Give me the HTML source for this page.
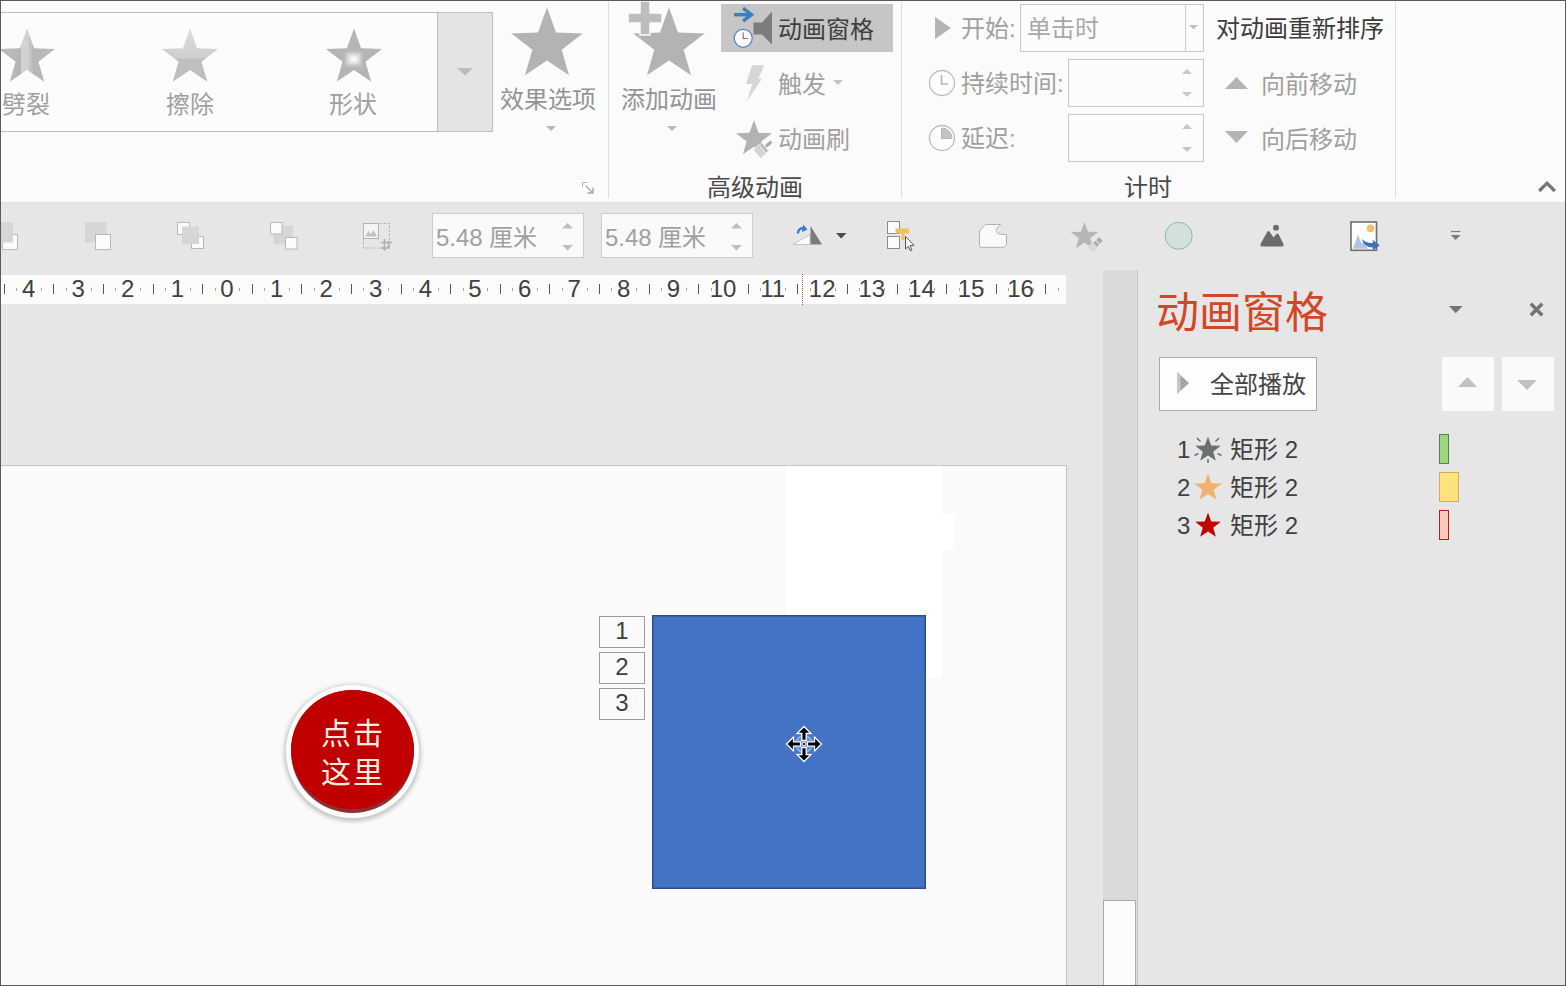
<!DOCTYPE html>
<html lang="zh-CN">
<head>
<meta charset="utf-8">
<title>动画窗格</title>
<style>
html,body{margin:0;padding:0;}
body{width:1566px;height:986px;overflow:hidden;position:relative;background:#e6e6e6;font-family:"Liberation Sans",sans-serif;font-size:24px;color:#a0a0a0;}
.abs{position:absolute;}
.t{position:absolute;white-space:nowrap;line-height:30px;height:30px;margin-top:2px;}
.dk{color:#3f3f3f;}
svg{position:absolute;overflow:visible;}
#ribbon{left:0;top:0;width:1566px;height:203px;background:#fbfbfb;}
.vsep{position:absolute;width:1px;background:#dcdcdc;top:2px;height:196px;}
.box{position:absolute;box-sizing:border-box;border:1px solid #c6c6c6;background:#fcfcfc;}
#ruler{left:0;top:275px;width:1066px;height:29px;background:#fcfcfc;}
#ruler .n{position:absolute;top:-1px;height:30px;line-height:30px;width:40px;margin-left:-20px;text-align:center;color:#404040;font-size:24px;}
#ruler .h{position:absolute;top:9px;width:1px;height:10px;background:#5a5a5a;}
#ruler .q{position:absolute;top:13px;width:1px;height:3px;background:#a4a4a4;}
#slide{left:-10px;top:465px;width:1077px;height:540px;background:#fafafa;border:1px solid #c4c4c4;box-sizing:border-box;}
.tag{position:absolute;left:599px;width:46px;height:32px;box-sizing:border-box;border:1px solid #9c9c9c;background:#fafafa;color:#404040;text-align:center;line-height:28px;font-size:24px;}
.row{position:absolute;left:1177px;height:38px;line-height:38px;margin-top:2px;color:#404040;white-space:nowrap;}
</style>
</head>
<body>

<!-- ===== RIBBON ===== -->
<div id="ribbon" class="abs">
  <!-- star defs -->
  <svg width="0" height="0" style="left:0;top:0;">
    <defs>
      <polygon id="st" points="0.0,-100.0 24.1,-33.2 95.1,-30.9 39.0,12.7 58.8,80.9 0.0,41.0 -58.8,80.9 -39.0,12.7 -95.1,-30.9 -24.1,-33.2"/>
      <linearGradient id="gSplit" x1="0" x2="1" y1="0" y2="0">
        <stop offset="0" stop-color="#bcbcbc"/><stop offset="0.395" stop-color="#b6b6b6"/><stop offset="0.40" stop-color="#d3d3d3"/><stop offset="0.535" stop-color="#d0d0d0"/><stop offset="0.54" stop-color="#c3c3c3"/><stop offset="0.595" stop-color="#c3c3c3"/><stop offset="0.60" stop-color="#b6b6b6"/><stop offset="1" stop-color="#bcbcbc"/>
      </linearGradient>
      <linearGradient id="gWipe" x1="0" x2="0" y1="0" y2="1">
        <stop offset="0" stop-color="#dcdcdc"/><stop offset="0.38" stop-color="#d3d3d3"/><stop offset="0.55" stop-color="#cecece"/><stop offset="0.57" stop-color="#c0c0c0"/><stop offset="1" stop-color="#bdbdbd"/>
      </linearGradient>
      <filter id="blur2" x="-50%" y="-50%" width="200%" height="200%"><feGaussianBlur stdDeviation="1.8"/></filter>
          </defs>
  </svg>
  <!-- gallery -->
  <div class="box" style="left:-5px;top:12px;width:443px;height:120px;border-color:#bebebe;"></div>
  <div class="box" style="left:437px;top:12px;width:56px;height:120px;background:#e4e4e4;border-color:#bebebe;"></div>
  <svg style="left:27.200px;top:57.500px;" width="1" height="1"><use href="#st" transform="scale(0.294)" fill="url(#gSplit)"/></svg>
  <svg style="left:189.800px;top:57.500px;" width="1" height="1"><use href="#st" transform="scale(0.294)" fill="url(#gWipe)"/></svg>
  <svg style="left:354px;top:57.500px;" width="1" height="1"><use href="#st" transform="scale(0.294)" fill="#b5b5b5"/><rect x="-8" y="-5.500" width="15" height="13" fill="#d9d9d9" filter="url(#blur2)"/><rect x="-4" y="-2" width="7.500" height="6" fill="#fbfbfb" filter="url(#blur2)"/></svg>
  <div class="t" style="left:2px;top:88px;">劈裂</div>
  <div class="t" style="left:166px;top:88px;">擦除</div>
  <div class="t" style="left:329px;top:88px;">形状</div>
  <svg style="left:456.500px;top:68px;" width="16" height="8"><polygon points="0,0 16,0 8,7.500" fill="#bcbcbc"/></svg>

  <!-- effect options -->
  <svg style="left:547px;top:45px;" width="1" height="1"><use href="#st" transform="scale(0.375)" fill="#b3b3b3"/></svg>
  <div class="t" style="left:500px;top:83px;color:#949494;">效果选项</div>
  <svg style="left:546px;top:126px;" width="10" height="5"><polygon points="0,0 10,0 5,5" fill="#b8b8b8"/></svg>
  <!-- dialog launcher -->
  <svg style="left:582px;top:182px;" width="13" height="13" viewBox="0 0 13 13"><path d="M0.5,5V0.5H5" fill="none" stroke="#b0b0b0" stroke-width="1"/><path d="M4,4L11,11M11,5.5V11H5.5" fill="none" stroke="#a8a8a8" stroke-width="1.4"/></svg>

  <div class="vsep" style="left:608px;"></div>

  <!-- add animation -->
  <svg style="left:669px;top:45px;" width="1" height="1"><use href="#st" transform="scale(0.375)" fill="#b3b3b3"/></svg>
  <svg style="left:628px;top:1px;" width="34" height="34" viewBox="0 0 34 34"><path d="M12,0H22V12H34V22H22V34H12V22H0V12H12Z" fill="#bdbdbd" stroke="#fbfbfb" stroke-width="1.5"/></svg>
  <div class="t" style="left:621px;top:83px;color:#949494;">添加动画</div>
  <svg style="left:667px;top:126px;" width="10" height="5"><polygon points="0,0 10,0 5,5" fill="#b8b8b8"/></svg>

  <!-- animation pane button -->
  <div class="abs" style="left:721px;top:4px;width:172px;height:48px;background:#c6c6c6;"></div>

  <!-- animation pane icon -->
  <svg style="left:730px;top:4px;" width="46" height="48" viewBox="730 4 46 48">
    <path d="M734,14.700H749" stroke="#3f7cc4" stroke-width="3.4" fill="none"/>
    <path d="M743,8.200L751.500,14.700L743,21.200" stroke="#3f7cc4" stroke-width="3.4" fill="none"/>
    <path d="M753.500,22.500H762L772,11.500V44.500L762,34.500H753.500Z" fill="#7c7c7c"/>
    <circle cx="743.200" cy="38.300" r="9" fill="#fdfdfd" stroke="#4a80d2" stroke-width="1.2"/>
    <path d="M743.200,32.500V38.500H748" stroke="#8a6a9a" stroke-width="1.2" fill="none"/>
  </svg>
  <!-- trigger bolt -->
  <svg style="left:744px;top:63px;" width="24" height="40" viewBox="744 63 24 40">
    <path d="M752,65.200H764.300L758.200,78.800H762L747,101L752.300,84H746Z" fill="#d6d6d6"/>
  </svg>
  <!-- animation painter -->
  <svg style="left:753.800px;top:138.500px;" width="1" height="1">
    <use href="#st" transform="scale(0.189)" fill="#b3b3b3"/>
    <g transform="translate(12.500,6.900) rotate(-40)" stroke="#f4f4f4" stroke-width="0.8">
      <rect x="-12.500" y="-5.800" width="7.500" height="11.600" fill="#d3d3d3"/>
      <rect x="-5" y="-5.200" width="3.500" height="10.400" fill="#b8b8b8"/>
      <rect x="-1.500" y="-1.900" width="8.500" height="3.800" rx="1.900" fill="#a9a9a9"/>
    </g>
  </svg>
  <div class="t dk" style="left:778px;top:13px;">动画窗格</div>
  <div class="t" style="left:778px;top:68px;">触发</div>
  <svg style="left:833px;top:80px;" width="10" height="5"><polygon points="0,0 10,0 5,5" fill="#c4c4c4"/></svg>
  <div class="t" style="left:778px;top:123px;">动画刷</div>
  <div class="t dk" style="left:707px;top:171px;color:#4a4a4a;">高级动画</div>

  <div class="vsep" style="left:901px;"></div>

  <!-- ===== timing group ===== -->
  <svg style="left:935px;top:17px;" width="16" height="22"><polygon points="0,0 16,11 0,22" fill="#b4b4b4"/></svg>
  <div class="t" style="left:961px;top:12px;">开始:</div>
  <div class="box" style="left:1020px;top:4px;width:184px;height:48px;border-color:#c8c8c8;"></div>
  <div class="abs" style="left:1185px;top:5px;width:1px;height:46px;background:#d0d0d0;"></div>
  <div class="t" style="left:1027px;top:12px;color:#a8a8a8;">单击时</div>
  <svg style="left:1189px;top:25px;" width="9" height="5"><polygon points="0,0 9,0 4.5,4.5" fill="#c0c0c0"/></svg>
  <div class="t dk" style="left:1216px;top:12px;color:#3c3c3c;">对动画重新排序</div>

  <svg style="left:928px;top:69px;" width="28" height="28" viewBox="0 0 28 28"><circle cx="14" cy="14" r="12.5" fill="#fdfdfd" stroke="#bdbdbd" stroke-width="1.3"/><path d="M13.5,6V15H20" fill="none" stroke="#b4b4b4" stroke-width="1.6"/></svg>
  <div class="t" style="left:961px;top:67px;">持续时间:</div>
  <div class="box" style="left:1068px;top:59px;width:136px;height:48px;border-color:#c8c8c8;"></div>
  <svg style="left:1182px;top:69px;" width="10" height="5"><polygon points="0,5 10,5 5,0" fill="#c8c8c8"/></svg>
  <svg style="left:1182px;top:92px;" width="10" height="5"><polygon points="0,0 10,0 5,5" fill="#c8c8c8"/></svg>
  <svg style="left:1225px;top:77px;" width="23" height="12"><polygon points="0,12 23,12 11.5,0" fill="#b4b4b4"/></svg>
  <div class="t" style="left:1260.500px;top:68px;">向前移动</div>

  <svg style="left:928px;top:124px;" width="28" height="28" viewBox="0 0 28 28"><circle cx="14" cy="14" r="12.5" fill="#fdfdfd" stroke="#bdbdbd" stroke-width="1.3"/><path d="M13.5,4V14.5H24A10.3,10.3 0 0 0 13.5,4Z" fill="#c4c4c4" stroke="#b4b4b4" stroke-width="1"/></svg>
  <div class="t" style="left:961px;top:122px;">延迟:</div>
  <div class="box" style="left:1068px;top:114px;width:136px;height:48px;border-color:#c8c8c8;"></div>
  <svg style="left:1182px;top:124px;" width="10" height="5"><polygon points="0,5 10,5 5,0" fill="#c8c8c8"/></svg>
  <svg style="left:1182px;top:147px;" width="10" height="5"><polygon points="0,0 10,0 5,5" fill="#c8c8c8"/></svg>
  <svg style="left:1225px;top:131px;" width="23" height="12"><polygon points="0,0 23,0 11.5,12" fill="#b4b4b4"/></svg>
  <div class="t" style="left:1260.500px;top:123px;">向后移动</div>
  <div class="t dk" style="left:1124px;top:171px;color:#4a4a4a;">计时</div>
  <div class="vsep" style="left:1395px;"></div>
  <svg style="left:1538px;top:180px;" width="18" height="13" viewBox="0 0 18 13"><path d="M1.2,11L9,3.200L16.800,11" fill="none" stroke="#747474" stroke-width="3.2"/></svg>
  <div class="abs" style="left:0;top:202px;width:1566px;height:1px;background:#e2e2e2;"></div>
</div>


<!-- ===== TOOLBAR (quick access) ===== -->
<div id="toolbar" class="abs" style="left:0;top:203px;width:1566px;height:68px;">
  <!-- arrange icons (disabled) ; coordinates relative to toolbar top=203 -->
  <svg style="left:0;top:0;" width="420" height="68" viewBox="0 203 420 68">
    <g stroke="#b9b9b9" stroke-width="1" fill="#fbfbfb">
      <rect x="2.5" y="234.5" width="15" height="15"/>
      <rect x="0" y="222" width="13" height="20.5" fill="#d6d6d6" stroke="none"/>
      <rect x="85" y="222" width="21.5" height="20.5" fill="#d6d6d6" stroke="none"/>
      <rect x="95.5" y="234.5" width="15" height="15"/>
      <rect x="177.5" y="222.5" width="12" height="12"/>
      <rect x="191.5" y="236.5" width="12" height="12"/>
      <rect x="182" y="226.5" width="17" height="17.5" fill="#d6d6d6" stroke="none"/>
      <rect x="273.5" y="226" width="19.5" height="18.5" fill="#d6d6d6" stroke="none"/>
      <rect x="270.5" y="222.5" width="11.5" height="11.5"/>
      <rect x="285.5" y="237.5" width="11.5" height="11.5"/>
    </g>
    <rect x="363.5" y="223.5" width="26" height="24.5" fill="none" stroke="#b4b4b4" stroke-width="1" stroke-dasharray="2.5,1.5"/>
    <rect x="363.5" y="223.5" width="15" height="15" fill="#f4f4f4" stroke="#b4b4b4" stroke-width="1"/>
    <path d="M365,236.5L368.5,231L371,234L373.5,230L377,236.5Z" fill="#c2c2c2"/>
    <path d="M384.5,239V251M381,242.5H392M381,248H388.5V241" fill="none" stroke="#b0b0b0" stroke-width="1.6"/>
  </svg>
  <!-- size boxes -->
  <div class="box" style="left:432px;top:10px;width:152px;height:45px;border-color:#cdcdcd;background:#fafafa;"></div>
  <div class="t" style="left:436px;top:17.5px;color:#a0a0a0;">5.48 厘米</div>
  <svg style="left:561.5px;top:20px;" width="11" height="6"><polygon points="0,5.5 11,5.5 5.5,0" fill="#bdbdbd"/></svg>
  <svg style="left:561.5px;top:41.5px;" width="11" height="6"><polygon points="0,0 11,0 5.5,5.5" fill="#bdbdbd"/></svg>
  <div class="box" style="left:601px;top:10px;width:152px;height:45px;border-color:#cdcdcd;background:#fafafa;"></div>
  <div class="t" style="left:605px;top:17.5px;color:#a0a0a0;">5.48 厘米</div>
  <svg style="left:730.5px;top:20px;" width="11" height="6"><polygon points="0,5.5 11,5.5 5.5,0" fill="#bdbdbd"/></svg>
  <svg style="left:730.5px;top:41.5px;" width="11" height="6"><polygon points="0,0 11,0 5.5,5.5" fill="#bdbdbd"/></svg>

  <!-- right icons -->
  <svg style="left:780px;top:0;" width="786" height="68" viewBox="780 203 786 68">
    <!-- rotate -->
    <polygon points="793,244.5 810,244.5 810,234.5" fill="#fbfbfb" stroke="#bdbdbd" stroke-width="0.8"/>
    <polygon points="810.5,226 822,244.5 810.5,244.5" fill="#7a7a7a"/>
    <path d="M798,233.5C798,228.5 802,227.5 804.5,228.5" fill="none" stroke="#3b78c4" stroke-width="2.2"/>
    <polygon points="803,224.5 807.5,229.5 802,232" fill="#3b78c4"/>
    <polygon points="836,233 846.5,233 841.2,238.4" fill="#4a4a4a"/>
    <!-- selection pane -->
    <rect x="887.5" y="221.5" width="12" height="12" fill="#fbfbfb" stroke="#8c8c8c"/>
    <rect x="887.5" y="236.5" width="12" height="12" fill="#fbfbfb" stroke="#8c8c8c"/>
    <path d="M895.5,228.5H909V233.5H904.5V240H901.5V233.5H895.5Z" fill="#efc15f"/>
    <path d="M905.5,236.5V249L908.3,246.3L910.3,250.8L912,250L910,245.6L914,245.3Z" fill="#fff" stroke="#555" stroke-width="1"/>
    <!-- shape -->
    <path d="M979.500,230.500L985.500,224.500H1000.800C996.200,227.500 995,231.500 998,233.300C1000,234.600 1003,234.500 1006.500,234.500V244.500L1004,247.300H981.500Q979.500,247.300 979.500,245.300Z" fill="#fafafa" stroke="#b0b0b0" stroke-width="1"/>
    <!-- animation painter small -->
    <polygon transform="translate(1084.5,236.5) scale(0.145)" points="0.0,-100.0 24.1,-33.2 95.1,-30.9 39.0,12.7 58.8,80.9 0.0,41.0 -58.8,80.9 -39.0,12.7 -95.1,-30.9 -24.1,-33.2" fill="#b6b6b6"/>
    <g transform="translate(1097.600,242.200) rotate(-45)"><rect x="-4.800" y="-2.600" width="4.200" height="5.200" fill="#adadad"/><rect x="0.400" y="-2.600" width="4.400" height="5.200" fill="#adadad"/></g>
    <g transform="translate(1092.800,247.200) rotate(-45)"><rect x="-3.600" y="-3.800" width="7" height="7.600" fill="#d8d8d8"/></g>
    <!-- circle -->
    <circle cx="1178.7" cy="235.8" r="13.5" fill="#d2e2db" stroke="#8db9a5" stroke-width="1"/>
    <!-- mountain -->
    <path d="M1260.5,244L1267.5,231.5Q1268.5,230.3 1269.5,231.5L1273.5,237.5L1276.5,234Q1277.5,233 1278.5,234L1283.5,244Q1284,246.5 1282,246.5H1262Q1260,246.5 1260.5,244Z" fill="#6c6c6c"/>
    <circle cx="1276" cy="227.8" r="3" fill="#6c6c6c"/>
    <!-- picture -->
    <rect x="1351" y="222" width="25.500" height="28.300" fill="#fdfdfd" stroke="#6e6e6e" stroke-width="1.6"/>
    <circle cx="1370.500" cy="228.400" r="3.800" fill="#efc070"/>
    <path d="M1352.800,248.800L1358,235L1361.500,243.500L1363.500,241.500L1368,248.800Z" fill="#b3c3e4"/>
    <path d="M1362,239C1363.500,244.800 1367,247.400 1372.800,247.400V250.500L1379.800,245.300L1372.800,240.100V243C1368.500,243.400 1365,242.200 1362,239Z" fill="#3b72b8"/>
    <!-- overflow -->
    <path d="M1451,231.5H1460.400" stroke="#808080" stroke-width="1.2"/>
    <polygon points="1450.8,235 1460.600,235 1455.700,240" fill="#7c7c7c"/>
  </svg>
</div>

<!-- ===== RULER ===== -->
<div id="ruler" class="abs">
  <div class="h" style="left:3.8px;"></div>
  <div class="q" style="left:16.2px;"></div>
  <div class="n" style="left:28.6px;">4</div>
  <div class="h" style="left:53.4px;"></div>
  <div class="q" style="left:41.0px;"></div>
  <div class="q" style="left:65.8px;"></div>
  <div class="n" style="left:78.2px;">3</div>
  <div class="h" style="left:103.0px;"></div>
  <div class="q" style="left:90.6px;"></div>
  <div class="q" style="left:115.4px;"></div>
  <div class="n" style="left:127.8px;">2</div>
  <div class="h" style="left:152.6px;"></div>
  <div class="q" style="left:140.2px;"></div>
  <div class="q" style="left:165.0px;"></div>
  <div class="n" style="left:177.4px;">1</div>
  <div class="h" style="left:202.2px;"></div>
  <div class="q" style="left:189.8px;"></div>
  <div class="q" style="left:214.6px;"></div>
  <div class="n" style="left:227.0px;">0</div>
  <div class="h" style="left:251.8px;"></div>
  <div class="q" style="left:239.4px;"></div>
  <div class="q" style="left:264.2px;"></div>
  <div class="n" style="left:276.6px;">1</div>
  <div class="h" style="left:301.4px;"></div>
  <div class="q" style="left:289.0px;"></div>
  <div class="q" style="left:313.8px;"></div>
  <div class="n" style="left:326.2px;">2</div>
  <div class="h" style="left:351.0px;"></div>
  <div class="q" style="left:338.6px;"></div>
  <div class="q" style="left:363.4px;"></div>
  <div class="n" style="left:375.8px;">3</div>
  <div class="h" style="left:400.6px;"></div>
  <div class="q" style="left:388.2px;"></div>
  <div class="q" style="left:413.0px;"></div>
  <div class="n" style="left:425.4px;">4</div>
  <div class="h" style="left:450.2px;"></div>
  <div class="q" style="left:437.8px;"></div>
  <div class="q" style="left:462.6px;"></div>
  <div class="n" style="left:475.0px;">5</div>
  <div class="h" style="left:499.8px;"></div>
  <div class="q" style="left:487.4px;"></div>
  <div class="q" style="left:512.2px;"></div>
  <div class="n" style="left:524.6px;">6</div>
  <div class="h" style="left:549.4px;"></div>
  <div class="q" style="left:537.0px;"></div>
  <div class="q" style="left:561.8px;"></div>
  <div class="n" style="left:574.2px;">7</div>
  <div class="h" style="left:599.0px;"></div>
  <div class="q" style="left:586.6px;"></div>
  <div class="q" style="left:611.4px;"></div>
  <div class="n" style="left:623.8px;">8</div>
  <div class="h" style="left:648.6px;"></div>
  <div class="q" style="left:636.2px;"></div>
  <div class="q" style="left:661.0px;"></div>
  <div class="n" style="left:673.4px;">9</div>
  <div class="h" style="left:698.2px;"></div>
  <div class="q" style="left:685.8px;"></div>
  <div class="q" style="left:710.6px;"></div>
  <div class="n" style="left:723.0px;">10</div>
  <div class="h" style="left:747.8px;"></div>
  <div class="q" style="left:735.4px;"></div>
  <div class="q" style="left:760.2px;"></div>
  <div class="n" style="left:772.6px;">11</div>
  <div class="h" style="left:797.4px;"></div>
  <div class="q" style="left:785.0px;"></div>
  <div class="q" style="left:809.8px;"></div>
  <div class="n" style="left:822.2px;">12</div>
  <div class="h" style="left:847.0px;"></div>
  <div class="q" style="left:834.6px;"></div>
  <div class="q" style="left:859.4px;"></div>
  <div class="n" style="left:871.8px;">13</div>
  <div class="h" style="left:896.6px;"></div>
  <div class="q" style="left:884.2px;"></div>
  <div class="q" style="left:909.0px;"></div>
  <div class="n" style="left:921.4px;">14</div>
  <div class="h" style="left:946.2px;"></div>
  <div class="q" style="left:933.8px;"></div>
  <div class="q" style="left:958.6px;"></div>
  <div class="n" style="left:971.0px;">15</div>
  <div class="h" style="left:995.8px;"></div>
  <div class="q" style="left:983.4px;"></div>
  <div class="q" style="left:1008.2px;"></div>
  <div class="n" style="left:1020.6px;">16</div>
  <div class="h" style="left:1045.4px;"></div>
  <div class="q" style="left:1033.0px;"></div>
  <div class="q" style="left:1057.8px;"></div>
  <div class="abs" style="left:802px;top:-1px;width:0;height:31px;border-left:1px dotted #b44848;"></div>
</div>

<!-- ===== SCROLLBAR ===== -->
<div class="abs" style="left:1103px;top:270px;width:34px;height:716px;background:#dadada;"></div>
<div class="abs" style="left:1137px;top:270px;width:1px;height:716px;background:#c8c8c8;"></div>
<div class="abs" style="left:1103px;top:900px;width:33px;height:90px;background:#fcfcfc;border:1px solid #ababab;box-sizing:border-box;"></div>


<!-- ===== ANIMATION PANE ===== -->
<div id="pane" class="abs" style="left:1138px;top:270px;width:428px;height:716px;background:#e6e6e6;">
</div>
<div class="t" style="left:1156px;top:281px;height:60px;line-height:60px;font-size:43px;color:#d24726;">动画窗格</div>
<svg style="left:1448.700px;top:305.700px;" width="14" height="8"><polygon points="0,0 13.600,0 6.800,7.200" fill="#747474"/></svg>
<svg style="left:1529px;top:301.500px;" width="15" height="15" viewBox="0 0 15 15"><path d="M1.8,1.800L13.200,13.200M13.200,1.800L1.800,13.200" stroke="#747474" stroke-width="3.5" fill="none"/></svg>
<div class="box" style="left:1159px;top:357px;width:158px;height:54px;border-color:#ababab;background:#fdfdfd;"></div>
<svg style="left:1177px;top:372px;" width="12" height="22"><polygon points="0,0 12,11 0,22" fill="#a4a4a4"/><polygon points="0,0 3.500,3.200 3.500,18.800 0,22" fill="#c6c6c6"/></svg>
<div class="t" style="left:1210px;top:368px;color:#444;">全部播放</div>
<div class="abs" style="left:1441.500px;top:357px;width:52.500px;height:53.500px;background:#fafafa;"></div>
<div class="abs" style="left:1501.500px;top:357px;width:52.500px;height:53.500px;background:#fafafa;"></div>
<svg style="left:1458px;top:377px;" width="19" height="10"><polygon points="0,10 19,10 9.5,0" fill="#c2c2c2"/></svg>
<svg style="left:1517px;top:380px;" width="20" height="10"><polygon points="0,0 20,0 10,10" fill="#c2c2c2"/></svg>

<div class="row" style="top:429px;">1</div>
<div class="row" style="top:467px;">2</div>
<div class="row" style="top:505px;">3</div>
<div class="row" style="top:429px;left:1230px;">矩形 2</div>
<div class="row" style="top:467px;left:1230px;">矩形 2</div>
<div class="row" style="top:505px;left:1230px;">矩形 2</div>
<svg style="left:1208px;top:450px;" width="1" height="1"><use href="#st" transform="scale(0.134)" fill="#6b7070"/>
  <path d="M-11,-12L-7.5,-8.5M11,-12L7.5,-8.5M-13.5,5.5L-9.5,3.5M13.500,5.5L9.5,3.5M0,9V13" stroke="#6b7070" stroke-width="1.5" fill="none"/></svg>
<svg style="left:1208px;top:488px;" width="1" height="1"><use href="#st" transform="scale(0.146)" fill="#efb26f"/></svg>
<svg style="left:1208px;top:525.500px;" width="1" height="1"><use href="#st" transform="scale(0.134)" fill="#c00000"/></svg>
<div class="abs" style="left:1439px;top:434px;width:10px;height:30px;box-sizing:border-box;background:#9bd77f;border:1px solid #5d7f52;"></div>
<div class="abs" style="left:1439px;top:472px;width:20px;height:30px;box-sizing:border-box;background:#ffe27c;border:1px solid #d9a95a;"></div>
<div class="abs" style="left:1439px;top:510px;width:10px;height:30px;box-sizing:border-box;background:#fcc8b8;border:1px solid #c01818;"></div>

<!-- ===== SLIDE ===== -->
<div id="slide" class="abs"></div>
<div class="abs" style="left:786px;top:466px;width:156px;height:212px;background:#fff;"></div>
<div class="abs" style="left:942px;top:514px;width:13px;height:37px;background:#fff;"></div>
<div class="abs" style="left:652px;top:615px;width:274px;height:274px;box-sizing:border-box;background:#4472c4;border:1px solid #2e4b8a;box-shadow:inset 0 0 0 1px rgba(47,82,143,0.55);"></div>
<div class="tag" style="top:616px;">1</div>
<div class="tag" style="top:652px;">2</div>
<div class="tag" style="top:688px;">3</div>


<!-- red round button -->
<div class="abs" style="left:285.500px;top:684.500px;width:133px;height:133px;border-radius:50%;background:#fdfdfd;box-shadow:0 1.500px 4px 2px rgba(0,0,0,0.21);"></div>
<div class="abs" style="left:290.500px;top:689.500px;width:123px;height:123px;border-radius:50%;background:#8e2f2f;"></div>
<div class="abs" style="left:290.500px;top:689.500px;width:123px;height:119.500px;border-radius:61.500px/59.750px;background:#c00000;"></div>
<div class="t" style="left:290px;top:712px;width:124px;height:39px;line-height:39px;text-align:center;font-size:30px;letter-spacing:2px;text-indent:2px;color:#fdeee0;">点击</div>
<div class="t" style="left:290px;top:751px;width:124px;height:39px;line-height:39px;text-align:center;font-size:30px;letter-spacing:2px;text-indent:2px;color:#fdeee0;">这里</div>

<!-- move cursor -->
<svg style="left:785px;top:725px;" width="38" height="38" viewBox="-19 -19 38 38">
  <circle cx="0" cy="0" r="8.5" fill="#5f8dd6" stroke="#a3c2ee" stroke-width="1.2"/>
  <path id="arr" d="M0,-17.500L7,-10.500H2.200V-3.500H-2.200V-10.500H-7Z" fill="#000" stroke="#fff" stroke-width="1.3" stroke-linejoin="miter"/>
  <use href="#arr" transform="rotate(90)"/>
  <use href="#arr" transform="rotate(180)"/>
  <use href="#arr" transform="rotate(270)"/>
  <circle cx="0" cy="0" r="1.6" fill="#000" stroke="#fff" stroke-width="1"/>
</svg>

<!-- ===== FRAME BORDER ===== -->
<div class="abs" style="left:0;top:0;width:1566px;height:986px;box-sizing:border-box;border:1px solid #5a5a5a;pointer-events:none;"></div>
</body>
</html>
